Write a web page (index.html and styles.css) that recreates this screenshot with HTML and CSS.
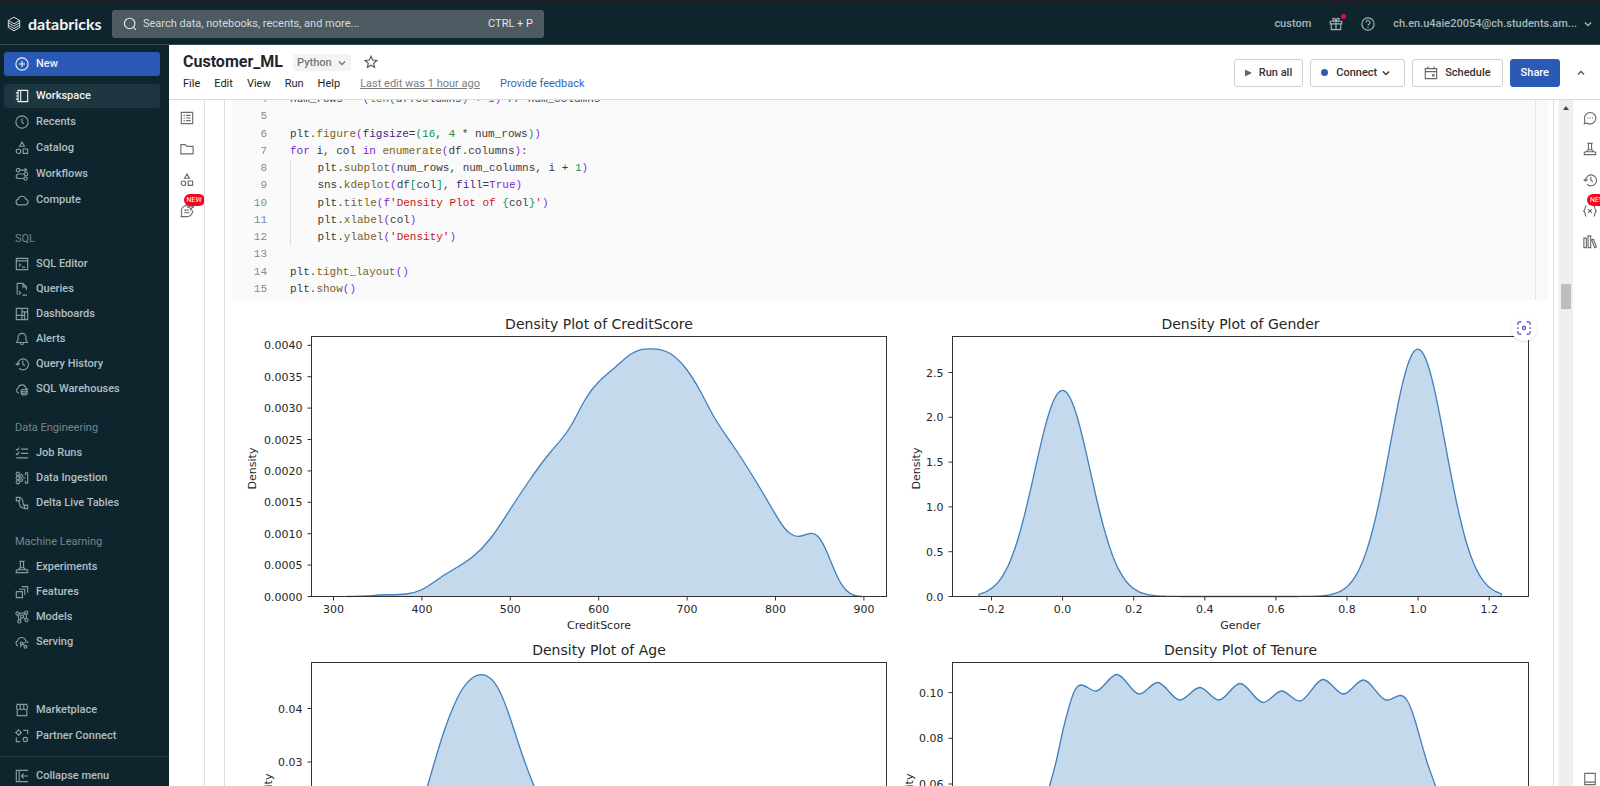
FILE: index.html
```html
<!DOCTYPE html>
<html lang="en">
<head>
<meta charset="utf-8">
<title>Customer_ML - Databricks</title>
<link rel="stylesheet" href="styles.css">
</head>
<body>
<svg class="sprite" aria-hidden="true">
  <symbol id="i-flask" viewBox="0 0 16 16"><path d="M5 1.5h6M6.2 1.5v7.3M9.8 1.5v7.3M6.2 8.8h3.6M4.2 11.2h7.6l2.7 0.3v3h-13v-3zM6.2 8.8 3.4 11.4M9.8 8.8l2.8 2.6"/></symbol>
  <symbol id="i-history" viewBox="0 0 16 16"><path d="M3 8.6a6.2 6.2 0 1 1 1.6 4M0.8 7 3 9.3 5.2 7M9 4.3v4l2.4 1.6"/></symbol>
  <symbol id="i-shapes" viewBox="0 0 16 16"><path d="M8 1.2 10.8 6H5.2z"/><circle cx="4" cy="11.7" r="2.6"/><path d="M9.4 9.2h5v5h-5z"/></symbol>
  <symbol id="i-chevron" viewBox="0 0 16 16"><path d="m3 5.5 5 5 5-5"/></symbol>
</svg>

<header class="topbar">
  <a class="brand" href="#">
    <svg class="brand-mark" viewBox="0 0 16 18"><path d="M1.5 5 8 1.2 14.5 5 8 8.8zM1.5 5v2.6L8 11.4l6.5-3.8V5M1.5 7.6v2.8L8 14.2l6.5-3.8V7.6M1.5 10.4V13L8 16.8l6.5-3.8v-2.6"/></svg>
    <span>databricks</span>
  </a>
  <label class="search">
    <svg class="icon" viewBox="0 0 16 16"><circle cx="7.6" cy="7.4" r="6"/><path d="m12 11.8 2.8 3"/></svg>
    <input type="text" placeholder="Search data, notebooks, recents, and more..." aria-label="Search">
    <span>CTRL + P</span>
  </label>
  <div class="account">
    <button class="top-button">custom</button>
    <button class="top-button gift" aria-label="What's new"><svg class="icon" viewBox="0 0 16 16"><path d="M1.5 4.8h13v3h-13zM2.6 7.8v6.7h10.8V7.8M8 4.8v9.7M8 4.8C4 4.8 3.6 1.4 5.4 1.4 7 1.4 8 3 8 4.8c0-1.8 1-3.4 2.6-3.4 1.8 0 1.4 3.4-2.6 3.4z"/></svg></button>
    <button class="top-button" aria-label="Help"><svg class="icon" viewBox="0 0 16 16"><circle cx="8" cy="8" r="7"/><path d="M5.7 6.3a2.3 2.3 0 1 1 3.4 2C8.3 8.7 8 9 8 10M8 11.3v1.2"/></svg></button>
    <button class="top-button user">ch.en.u4aie20054@ch.students.am... <svg class="icon-small" viewBox="0 0 16 16"><use href="#i-chevron"/></svg></button>
  </div>
</header>

<div class="shell">
  <nav class="sidebar">
    <div class="group main-group">
      <button class="item new"><svg class="icon" viewBox="0 0 16 16"><circle cx="8" cy="8" r="7"/><path d="M8 4.5v7M4.5 8h7"/></svg>New</button>
      <a class="item current" href="#"><svg class="icon" viewBox="0 0 16 16"><path d="M3.5 1.5h11v13h-11zM6.5 1.5v13M1 4.5h2.5M1 8h2.5M1 11.5h2.5"/></svg>Workspace</a>
      <a class="item" href="#"><svg class="icon" viewBox="0 0 16 16"><circle cx="8" cy="8" r="7"/><path d="M8 4v4.3l2 1.7"/></svg>Recents</a>
      <a class="item" href="#"><svg class="icon" viewBox="0 0 16 16"><use href="#i-shapes"/></svg>Catalog</a>
      <a class="item" href="#"><svg class="icon" viewBox="0 0 16 16"><circle cx="3.5" cy="3.5" r="2"/><circle cx="12.5" cy="8" r="2"/><path d="M5.5 3.5h7.5M10.5 8H4a2.6 2.6 0 0 0 0 5.2h6M11 1.5l2.5 2-2.5 2"/><circle cx="12" cy="13.2" r="1.9"/></svg>Workflows</a>
      <a class="item" href="#"><svg class="icon" viewBox="0 0 16 16"><path d="M4.2 13.5a3.3 3.3 0 0 1-.4-6.5 4.4 4.4 0 0 1 8.5 0 3.3 3.3 0 0 1-.3 6.5z"/></svg>Compute</a>
    </div>
    <div class="group">
      <h2 class="heading">SQL</h2>
      <a class="item" href="#"><svg class="icon" viewBox="0 0 16 16"><path d="M1.5 1.5h13v13h-13zM1.5 4.5h13M4.5 7.5l2 1.7-2 1.8M8 11.5h3.5"/></svg>SQL Editor</a>
      <a class="item" href="#"><svg class="icon" viewBox="0 0 16 16"><path d="M2.5 14.5v-13h6.5l4 4V9M9 1.5v4h4M4.5 10.5l2 2-2 2M8.5 15h5"/></svg>Queries</a>
      <a class="item" href="#"><svg class="icon" viewBox="0 0 16 16"><path d="M1.5 1.5h13v13h-13zM8 1.5v13M1.5 9.5H8M8 5.5h6.5M11 5.5v9M8 9.5h3"/></svg>Dashboards</a>
      <a class="item" href="#"><svg class="icon" viewBox="0 0 16 16"><path d="M8 1.5a4.5 4.5 0 0 0-4.5 4.5v3L1.8 12h12.4L12.5 9V6A4.5 4.5 0 0 0 8 1.5zM6 12.3a2 2 0 0 0 4 0"/></svg>Alerts</a>
      <a class="item" href="#"><svg class="icon" viewBox="0 0 16 16"><use href="#i-history"/></svg>Query History</a>
      <a class="item" href="#"><svg class="icon" viewBox="0 0 16 16"><path d="M4.5 12.5A3.2 3.2 0 0 1 3.6 6.5a4.5 4.5 0 0 1 8.7.3 3 3 0 0 1 2.2 2"/><ellipse cx="10.5" cy="9.8" rx="3.3" ry="1.4"/><path d="M7.2 9.8v3.6c0 1.9 6.6 1.9 6.6 0V9.8M7.2 11.7c0 1.7 6.6 1.7 6.6 0"/></svg>SQL Warehouses</a>
    </div>
    <div class="group">
      <h2 class="heading">Data Engineering</h2>
      <a class="item" href="#"><svg class="icon" viewBox="0 0 16 16"><path d="M7 3.5h8M7 8.5h8M1.5 13.5H15M1 3.5l1.5 1.3L5 1.7M1 8.5l1.5 1.3L5 6.7"/></svg>Job Runs</a>
      <a class="item" href="#"><svg class="icon" viewBox="0 0 16 16"><circle cx="3.2" cy="3.2" r="1.9"/><circle cx="3.2" cy="8" r="1.9"/><circle cx="3.2" cy="12.8" r="1.9"/><circle cx="7.2" cy="5.6" r="1.6"/><circle cx="7.2" cy="10.4" r="1.6"/><path d="M9 8h3M12 5V2h2.5v12H12v-3"/></svg>Data Ingestion</a>
      <a class="item" href="#"><svg class="icon" viewBox="0 0 16 16"><path d="M1.5 1.5h4v4h-4zM5.5 2c6 0 2 9.5 5.5 9.5M3.5 5.5C6 6 3 14 11 14M11 10.5h3.5v4H11z"/></svg>Delta Live Tables</a>
    </div>
    <div class="group">
      <h2 class="heading">Machine Learning</h2>
      <a class="item" href="#"><svg class="icon" viewBox="0 0 16 16"><use href="#i-flask"/></svg>Experiments</a>
      <a class="item" href="#"><svg class="icon" viewBox="0 0 16 16"><path d="M1.5 7.5h7v7h-7zM4.5 4.8h6.7v6.7M7.5 1.8h7v7"/></svg>Features</a>
      <a class="item" href="#"><svg class="icon" viewBox="0 0 16 16"><circle cx="2.8" cy="4" r="1.8"/><circle cx="12.8" cy="2.9" r="1.8"/><circle cx="8" cy="7.5" r="1.8"/><circle cx="5" cy="13" r="1.8"/><circle cx="13.2" cy="11.5" r="1.8"/><path d="M4.6 3.8 11 3.1M4.4 5l2.1 1.4M9.3 6.2l2.3-2M7.2 9.2l-1.4 2.2M9.6 8.5l2.1 1.9M13 4.7v5M3.2 5.8l1.3 5.4"/></svg>Models</a>
      <a class="item" href="#"><svg class="icon" viewBox="0 0 16 16"><path d="M3.5 12.5A3.2 3.2 0 0 1 3 6.5a4.7 4.7 0 0 1 9.2.3 3 3 0 0 1 2.6 2.5"/><circle cx="7.5" cy="9.5" r="1.5"/><circle cx="12" cy="13.5" r="1.6"/><path d="m8.7 10.5 2.2 2M12 8.5l-3 1M6 14l1.3-3"/></svg>Serving</a>
    </div>
    <div class="group bottom-group">
      <a class="item" href="#"><svg class="icon" viewBox="0 0 16 16"><path d="M2.5 1.5h11l1 4a2.2 2.2 0 0 1-4.4 0 2.1 2.1 0 0 1-4.2 0 2.2 2.2 0 0 1-4.4 0zM6 1.5v4M10 1.5v4M2.5 8v6.5h11V8"/></svg>Marketplace</a>
      <a class="item" href="#"><svg class="icon" viewBox="0 0 16 16"><circle cx="4" cy="4" r="2.3"/><circle cx="11.8" cy="12" r="2.5"/><path d="M9.5 1.5h5V6M1.5 9.5v5H6M4 0v1.5M4 6.5V8M0 4h1.5M6.5 4H8"/></svg>Partner Connect</a>
    </div>
    <div class="collapse">
      <button class="item"><svg class="icon" viewBox="0 0 16 16"><path d="M15 1.5H1.5v13H15M4.8 1.5v13M14.5 8H7.5M10 5.3 7.3 8l2.7 2.7"/></svg>Collapse menu</button>
    </div>
  </nav>

  <main class="notebook">
    <header class="nb-header">
      <div class="nb-info">
        <div class="title-row">
          <h1 class="title">Customer_ML</h1>
          <button class="language">Python <svg class="icon-small" viewBox="0 0 16 16"><use href="#i-chevron"/></svg></button>
          <button class="plain" aria-label="Favorite"><svg class="icon" viewBox="0 0 16 16"><path d="m8 1.5 1.9 4.3 4.7.5-3.5 3.1 1 4.6L8 11.6 3.9 14l1-4.600L1.400 6.300l4.700-.5z"/></svg></button>
        </div>
        <div class="menu-row">
          <button class="plain">File</button>
          <button class="plain">Edit</button>
          <button class="plain">View</button>
          <button class="plain">Run</button>
          <button class="plain">Help</button>
          <a class="last-edit" href="#">Last edit was 1 hour ago</a>
          <a class="feedback" href="#">Provide feedback</a>
        </div>
      </div>
      <div class="actions">
        <button class="action"><svg class="play" viewBox="0 0 8 8"><path d="M0 0l8 4-8 4z"/></svg>Run all</button>
        <button class="action connect"><span class="dot"></span><span>Connect</span><svg class="icon-small" viewBox="0 0 16 16"><use href="#i-chevron"/></svg></button>
        <button class="action schedule"><svg class="icon" viewBox="0 0 16 16"><path d="M1.5 3h13v11.5h-13zM1.5 6.5h13M4.5 .5v3M11.5 .5v3"/><circle cx="10.7" cy="10.7" r="1"/></svg>Schedule</button>
        <button class="action share">Share</button>
        <button class="plain up" aria-label="Collapse header"><svg class="icon-small" viewBox="0 0 16 16"><path d="m3 10.5 5-5 5 5"/></svg></button>
      </div>
    </header>

    <div class="workarea">
      <aside class="rail left-rail">
        <button class="tool" aria-label="Table of contents"><svg class="icon" viewBox="0 0 16 16"><path d="M1.5 1.5h13v13h-13zM4 5h1.5M7 5h5M4 8h1.5M7 8h5M4 11h1.5M7 11h5"/></svg></button>
        <button class="tool" aria-label="Files"><svg class="icon" viewBox="0 0 16 16"><path d="M1 3h5l2 2h7v8.5H1z"/></svg></button>
        <button class="tool" aria-label="Catalog"><svg class="icon" viewBox="0 0 16 16"><use href="#i-shapes"/></svg></button>
        <button class="tool" aria-label="Assistant"><svg class="icon" viewBox="0 0 16 16"><path d="M9 1.8a6.3 6.3 0 0 0-7 8.5L1.3 14.5H8A6.5 6.5 0 0 0 14.5 7.5M5 7h5M5 10h6M12.5 0l.9 2.6 2.6.9-2.6.9-.9 2.6-.9-2.6L9 3.5l2.6-.9z"/></svg><span class="badge">NEW</span></button>
      </aside>

      <div class="scroller">
        <div class="cells">
          <section class="cell">
            <div class="code">
              <div class="line"><span class="num">4</span><code>num_rows = <b class="p">(</b><b class="f">len</b><b class="g">(</b>df.columns<b class="g">)</b> + <b class="g">1</b><b class="p">)</b> // num_columns</code></div>
              <div class="line"><span class="num">5</span><code></code></div>
              <div class="line"><span class="num">6</span><code>plt.<b class="f">figure</b><b class="p">(</b><b class="a">figsize</b>=<b class="g">(16</b>, <b class="g">4</b> * num_rows<b class="g">)</b><b class="p">)</b></code></div>
              <div class="line"><span class="num">7</span><code><b class="k">for</b> i, col <b class="k">in</b> <b class="f">enumerate</b><b class="p">(</b>df.columns<b class="p">)</b>:</code></div>
              <div class="line block"><span class="num">8</span><code>    plt.<b class="f">subplot</b><b class="p">(</b>num_rows, num_columns, i + <b class="g">1</b><b class="p">)</b></code></div>
              <div class="line block"><span class="num">9</span><code>    sns.<b class="f">kdeplot</b><b class="p">(</b>df<b class="g">[</b>col<b class="g">]</b>, <b class="a">fill</b>=<b class="k">True</b><b class="p">)</b></code></div>
              <div class="line block"><span class="num">10</span><code>    plt.<b class="f">title</b><b class="p">(</b><b class="k">f</b><b class="s">'Density Plot of </b><b class="g">{</b>col<b class="g">}</b><b class="s">'</b><b class="p">)</b></code></div>
              <div class="line block"><span class="num">11</span><code>    plt.<b class="f">xlabel</b><b class="p">(</b>col<b class="p">)</b></code></div>
              <div class="line block"><span class="num">12</span><code>    plt.<b class="f">ylabel</b><b class="p">(</b><b class="s">'Density'</b><b class="p">)</b></code></div>
              <div class="line"><span class="num">13</span><code></code></div>
              <div class="line"><span class="num">14</span><code>plt.<b class="f">tight_layout</b><b class="p">()</b></code></div>
              <div class="line"><span class="num">15</span><code>plt.<b class="f">show</b><b class="p">()</b></code></div>
            </div>
            <div class="output">
              <svg id="figure" class="figure" viewBox="0 0 1316 660" role="img" aria-label="Density plots"></svg>
              <button class="lens" aria-label="Search in image"><svg class="icon" viewBox="0 0 16 16"><path d="M1 4.5V3a2 2 0 0 1 2-2h2M11 1h2a2 2 0 0 1 2 2v1.5M15 11.5V13a2 2 0 0 1-2 2h-2M5 15H3a2 2 0 0 1-2-2v-1.5M1 7v2M15 7v2"/><circle cx="8" cy="8" r="1.8"/></svg></button>
            </div>
          </section>
        </div>
        <div class="scrollbar"><span class="arrow"></span><span class="thumb"></span></div>
      </div>

      <aside class="rail right-rail">
        <button class="tool" aria-label="Comments"><svg class="icon" viewBox="0 0 16 16"><path d="M1.5 14.5l.6-4A6.5 6.5 0 1 1 5 13.9zM5 7.8h1M7.6 7.8h1M10.2 7.8h1"/></svg></button>
        <button class="tool" aria-label="Experiments"><svg class="icon" viewBox="0 0 16 16"><use href="#i-flask"/></svg></button>
        <button class="tool" aria-label="Revision history"><svg class="icon" viewBox="0 0 16 16"><use href="#i-history"/></svg></button>
        <button class="tool" aria-label="Variables"><svg class="icon" viewBox="0 0 16 16"><path d="M4 2C1.5 2 3.5 6.5.8 8c2.7 1.5.7 6 3.2 6M12 2c2.5 0 .5 4.5 3.2 6-2.7 1.5-.7 6-3.2 6M5.8 5.8l4.4 4.4M10.2 5.8l-4.4 4.4"/></svg><span class="badge">NEW</span></button>
        <button class="tool" aria-label="Libraries"><svg class="icon" viewBox="0 0 16 16"><path d="M1 3.5h2.8v11H1zM5.8 1h3v13.5h-3zM10 5.5l2-.7 3.3 9-2 .7z"/></svg></button>
        <button class="tool last" aria-label="Bottom panel"><svg class="icon" viewBox="0 0 16 16"><path d="M2 1.5h12v13H2zM2 11.5h12"/></svg></button>
      </aside>
    </div>
  </main>
</div>
<script src="plots.js"></script>
</body>
</html>
```
FILE: styles.css
```css
* { box-sizing: border-box; }

body {
  margin: 0;
  height: 100vh;
  display: flex;
  flex-direction: column;
  overflow: hidden;
  font: 11px/16px Roboto, sans-serif;
  color: #1f272d;
}

button, input { font: inherit; color: inherit; }
button { margin: 0; padding: 0; border: 0; background: none; white-space: nowrap; }
a { color: inherit; text-decoration: none; }
.sprite { display: none; }

.icon, .icon-small, .brand-mark {
  width: 14px;
  height: 14px;
  flex: none;
  fill: none;
  stroke: currentColor;
  stroke-width: 1.3;
}
.icon-small { width: 10px; height: 10px; stroke-width: 2; }

/* Top bar */
.topbar {
  flex: none;
  display: flex;
  align-items: center;
  height: 45px;
  padding: 0 7px;
  border-top: 4px solid #1b1f23;
  border-bottom: 1px solid #34464f;
  background: #0f252d;
  color: #a7b5bb;
}
.brand { display: flex; align-items: center; gap: 7px; width: 105px; color: #f2f4f5; font: 700 16px/20px Lato, sans-serif; }
.brand-mark { height: 16px; stroke-width: 1; }
.search {
  display: flex;
  align-items: center;
  gap: 6px;
  width: 432px;
  height: 28px;
  padding: 0 11px;
  border-radius: 3px;
  background: #4e5a61;
  color: #e3e7e9;
}
.search input { flex: 1; min-width: 0; padding: 0; border: 0; outline: 0; background: none; }
.search input::placeholder { color: #d5dbde; opacity: 1; }
.account { margin-left: auto; display: flex; align-items: center; gap: 18px; font-weight: 500; }
.top-button { display: flex; align-items: center; gap: 6px; }
.gift { position: relative; }
.gift::after { content: ""; position: absolute; top: -3px; right: -3px; width: 5px; height: 5px; border-radius: 50%; background: #e0122e; }

/* Sidebar */
.shell { flex: 1; min-height: 0; display: flex; }
.sidebar {
  flex: none;
  width: 169px;
  display: flex;
  flex-direction: column;
  padding-top: 7px;
  overflow: hidden;
  background: #0f252d;
  color: #b1bec4;
  font-weight: 500;
}
.group { display: flex; flex-direction: column; gap: 1px; margin-bottom: 15px; padding: 0 9px 0 4px; }
.main-group { gap: 2px; }
.item { display: flex; align-items: center; gap: 7px; height: 24px; padding-left: 11px; border-radius: 3px; }
.item .icon { color: #8a9ba3; }
.new { margin-bottom: 6px; background: #2a5ab5; color: #eef2f8; }
.current { background: #1d3640; color: #f0f3f4; }
.new .icon, .current .icon { color: inherit; }
.heading { margin: 0; padding-left: 11px; font-size: 11px; line-height: 24px; font-weight: 400; color: #74858d; }
.bottom-group { gap: 2px; margin: auto 0 8px; }
.collapse { padding: 8px 4px 0; border-top: 1px solid #2b3f47; }
.collapse .item { height: 21px; }

/* Notebook header */
.notebook { flex: 1; min-width: 0; display: flex; flex-direction: column; background: #fff; }
.nb-header {
  flex: none;
  display: flex;
  justify-content: space-between;
  height: 55px;
  padding: 7px 14px 0 14px;
  border-bottom: 1px solid #dcdcdc;
}
.title-row { display: flex; align-items: center; height: 20px; }
.title { margin: 0; font-size: 16px; line-height: 20px; font-weight: 700; }
.language { display: flex; align-items: center; gap: 5px; margin: 0 13px 0 10px; padding: 1px 4px 0; border-radius: 3px; background: #f3f3f3; color: #777; font-weight: 500; }
.title-row .icon { color: #555; }
.plain { display: flex; align-items: center; }
.menu-row { display: flex; gap: 14px; margin-top: 4px; color: #222; }
.last-edit { margin: 0 6px; color: #7c7c7c; text-decoration: underline; }
.feedback { color: #3565b5; }
.actions { display: flex; align-items: center; gap: 7px; height: 41px; }
.action {
  display: flex;
  align-items: center;
  gap: 7px;
  height: 28px;
  padding: 0 10px;
  border: 1px solid #cfcfcf;
  border-radius: 3px;
  font-weight: 500;
  color: #333;
}
.play { width: 7px; height: 8px; fill: #666; }
.dot { width: 7px; height: 7px; margin-right: 4px; border-radius: 50%; background: #2a5ab5; }
.connect { gap: 4px; padding-right: 13px; }
.schedule { padding: 0 11px; }
.schedule .icon { color: #666; }
.share { border-color: #2a5ab5; background: #2a5ab5; color: #fff; }
.up { margin-left: 9px; color: #555; }

/* Side rails */
.workarea { flex: 1; min-height: 0; display: flex; }
.rail { flex: none; display: flex; flex-direction: column; gap: 17px; padding-top: 11px; overflow: hidden; color: #6b6b6b; }
.left-rail { width: 36px; align-items: center; border-right: 1px solid #ddd; }
.right-rail { width: 27px; padding-left: 10px; }
.tool { position: relative; display: flex; }
.last { margin-top: auto; }
.badge {
  position: absolute;
  left: 4px;
  top: -10px;
  padding: 0 3px;
  border-radius: 6px;
  background: #f3041c;
  color: #fff;
  font-size: 7px;
  line-height: 12px;
}

/* Cells */
.scroller { flex: 1; min-width: 0; display: flex; overflow: hidden; }
.cells { flex: 1; min-width: 0; padding: 0 5px 0 19px; overflow: hidden; }
.cell { margin-top: -9px; padding: 0 5px 0 7px; border: solid #ddd; border-width: 0 1px; }
.code {
  display: grid;
  grid-auto-rows: 1fr;
  min-height: 209px;
  margin-right: 12px;
  padding-bottom: 2px;
  border-right: 1px solid #e6e6e6;
  background: #fafafa;
  box-shadow: 12px 0 0 #fafafa;
  font: 11px/17px "Liberation Mono", monospace;
  color: #3b3b3b;
}
.line { display: grid; grid-template-columns: 35px 1fr; column-gap: 23px; align-items: center; }
.line code { font: inherit; white-space: pre; }
.line b { font-weight: 400; }
.num { text-align: right; color: #848b91; }
.block code { border-left: 1px solid #ddd; align-self: stretch; }
.f { color: #795e26; }
.p { color: #8529e6; }
.k { color: #7b22e0; }
.a { color: #3f1d8c; }
.g { color: #0f9455; }
.s { color: #cc1418; }

.output { position: relative; }
.figure { display: block; width: 100%; height: auto; font: 11px "DejaVu Sans", sans-serif; fill: #262626; }
.plot-title { font-size: 14px; }
.axis { fill: none; stroke: #333; stroke-width: 1; }
.area { fill: #c4d9ec; }
.curve { fill: none; stroke: #3f7fbd; stroke-width: 1.3; }
.lens {
  position: absolute;
  right: 11px;
  top: 15px;
  display: flex;
  padding: 6px;
  border-radius: 50%;
  background: #fff;
  color: #4a3fc0;
  box-shadow: 0 1px 3px #0002;
}

/* Scrollbar */
.scrollbar { flex: none; width: 14px; display: flex; flex-direction: column; align-items: center; padding-top: 6px; background: #efefef; }
.arrow { border: solid transparent; border-width: 0 3px 4px; border-bottom-color: #444; }
.thumb { width: 10px; height: 25px; margin-top: 174px; background: #bdbdbd; }
```
FILE: plots.js
```js
const NS = 'http://www.w3.org/2000/svg';
const figure = document.getElementById('figure');

function add(tag, attrs, text) {
  const el = document.createElementNS(NS, tag);
  for (const key in attrs) el.setAttribute(key, attrs[key]);
  if (text !== undefined) el.textContent = text;
  figure.appendChild(el);
}

// Natural cubic spline through the sample points, as bezier segments.
function smooth(points) {
  const n = points.length;
  const w = [], s = [];
  for (let i = 0; i < n - 1; i++) {
    w.push(points[i + 1][0] - points[i][0]);
    s.push((points[i + 1][1] - points[i][1]) / w[i]);
  }
  const c = [0], r = [s[0]];
  for (let i = 1; i < n; i++) {
    if (i === n - 1) {
      r.push(s[n - 2]);
      break;
    }
    const a = w[i], b = 2 * (w[i - 1] + w[i]);
    const rhs = 3 * (w[i] * s[i - 1] + w[i - 1] * s[i]);
    const m = b - a * c[i - 1];
    c.push(w[i - 1] / m);
    r.push((rhs - a * r[i - 1]) / m);
  }
  const t = r.slice();
  for (let i = n - 2; i > 0; i--) t[i] = r[i] - c[i] * t[i + 1];
  let d = '';
  for (let i = 0; i < n - 1; i++) {
    const [x0, y0] = points[i], [x1, y1] = points[i + 1], h = w[i] / 3;
    d += 'C' + [x0 + h, y0 + h * t[i], x1 - h, y1 - h * t[i + 1], x1, y1].map(v => v.toFixed(2));
  }
  return d;
}

function plot(o) {
  const base = o.top + 260;
  const mid = (o.left + o.right) / 2;
  const [x, y] = o.points[0];
  const d = `M${x} ${base}V${y}${smooth(o.points)}V${base}`;
  add('path', { class: 'area', d: d + 'Z' });
  add('path', { class: 'curve', d });
  add('rect', { class: 'axis', x: o.left, y: o.top, width: o.right - o.left, height: 260 });
  add('text', { class: 'plot-title', x: mid, y: o.top - 8, 'text-anchor': 'middle' }, 'Density Plot of ' + o.name);
  add('text', { x: mid, y: base + 32, 'text-anchor': 'middle' }, o.name);
  add('text', { transform: `translate(${o.labelX} ${base - 128}) rotate(-90)`, 'text-anchor': 'middle' }, 'Density');
  o.xTicks.forEach((t, i) => {
    const x = o.x0 + i * o.dx;
    add('path', { class: 'axis', d: `M${x} ${base}v4` });
    add('text', { x, y: base + 16, 'text-anchor': 'middle' }, t);
  });
  o.yTicks.forEach((t, i) => {
    const y = o.y0 - i * o.dy;
    add('path', { class: 'axis', d: `M${o.left} ${y}h-4` });
    add('text', { x: o.left - 9, y: y + 4, 'text-anchor': 'end' }, t);
  });
}

const gender = [];
for (let v = -0.235; v <= 1.2351; v += 0.0049) {
  const bell = (m, h) => h * Math.exp(-((v - m) ** 2) / (2 * 0.0785 ** 2));
  gender.push([830.5 + v * 355.3, 296.5 - 89.6 * (bell(0, 2.3) + bell(1, 2.76))]);
}

plot({
  name: 'CreditScore', left: 79.5, right: 654.5, top: 36.5, labelX: 24,
  x0: 101.5, dx: 88.4, xTicks: [300, 400, 500, 600, 700, 800, 900],
  y0: 296.5, dy: 31.4, yTicks: ['0.0000', '0.0005', '0.0010', '0.0015', '0.0020', '0.0025', '0.0030', '0.0035', '0.0040'],
  points: [[115, 296.5], [134, 296], [148, 295], [174, 294], [189, 290], [210, 276.5], [241, 256.5], [258, 239], [275.5, 213.5], [297, 181], [319, 151.5], [338.5, 126.5], [353.5, 99], [366.5, 82], [384, 66.5], [399, 54], [410, 49.3], [419, 48.8], [429, 49.8], [439, 54], [453.5, 68], [468.5, 91.5], [481.5, 116], [501, 145.5], [522.5, 179], [540, 208.5], [552, 227.5], [559, 234], [566, 236.3], [573, 234.8], [580, 233.3], [586, 236.5], [594, 250], [605, 276], [614, 290], [622.5, 295.5], [630, 296.5]]
});

plot({
  name: 'Gender', left: 720.5, right: 1296.5, top: 36.5, labelX: 688,
  x0: 759.5, dx: 71.1, xTicks: ['−0.2', '0.0', '0.2', '0.4', '0.6', '0.8', '1.0', '1.2'],
  y0: 296.5, dy: 44.8, yTicks: ['0.0', '0.5', '1.0', '1.5', '2.0', '2.5'],
  points: gender
});

plot({
  name: 'Age', left: 79.5, right: 654.5, top: 362.5, labelX: 40,
  xTicks: [],
  y0: 462, dy: 53.5, yTicks: ['0.03', '0.04'],
  points: [[120, 622], [160, 580], [182, 532], [195.5, 486], [204, 457], [213, 428.5], [221.5, 406.5], [230, 389.5], [239, 379], [249.5, 374.7], [258, 378], [267, 390], [278, 417.5], [289, 451], [302, 486], [330, 545], [380, 595], [450, 616], [560, 622]]
});

plot({
  name: 'Tenure', left: 720.5, right: 1296.5, top: 362.5, labelX: 681,
  xTicks: [],
  y0: 484, dy: 45.7, yTicks: ['0.06', '0.08', '0.10'],
  points: [[760, 622], [790, 570], [817.5, 486], [824.5, 460], [831, 430], [837, 407], [842, 392], [849, 385], [864.5, 391], [885, 374.5], [907, 394], [925.5, 382.5], [947.5, 400], [968, 387.5], [987, 400], [1008, 383.5], [1031, 402.5], [1049.5, 391], [1068, 401], [1091, 379.5], [1111.5, 394], [1131.5, 380], [1154, 400], [1168, 395.5], [1175.5, 401], [1183.5, 422], [1195, 462], [1203.5, 486], [1230, 570], [1260, 622]]
});
```
